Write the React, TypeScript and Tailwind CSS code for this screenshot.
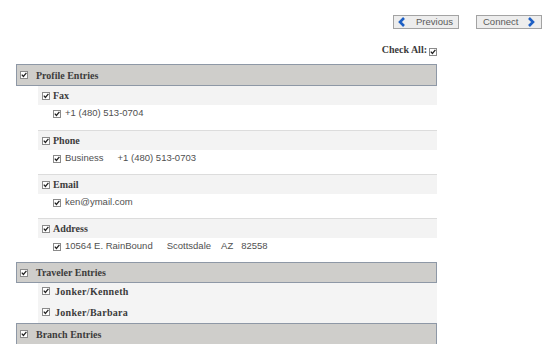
import React from 'react';

const serif = { fontFamily: '"Liberation Serif", "Times New Roman", serif' };
const sans = { fontFamily: '"Liberation Sans", Arial, sans-serif' };

function Box() {
  return (
    <span className="inline-flex h-[8px] w-[8px] shrink-0 items-center justify-center border border-[#8a8a8a] bg-white">
      <svg width="6" height="6" viewBox="0 0 6 6">
        <path d="M0.8 2.6 L2.4 4.4 L5.4 0.9" fill="none" stroke="#222" strokeWidth="1.3" />
      </svg>
    </span>
  );
}

function Chevron({ dir }: { dir: 'left' | 'right' }) {
  return (
    <svg width="8" height="10" viewBox="0 0 8 10">
      <path
        d={dir === 'left' ? 'M6 1 L2 5 L6 9' : 'M2 1 L6 5 L2 9'}
        fill="none"
        stroke="#1d5fc4"
        strokeWidth="2.6"
      />
    </svg>
  );
}

const groups = [
  { label: 'Fax', values: ['+1 (480) 513-0704'] },
  { label: 'Phone', values: ['Business', '+1 (480) 513-0703'] },
  { label: 'Email', values: ['ken@ymail.com'] },
  { label: 'Address', values: ['10564 E. RainBound', 'Scottsdale', 'AZ', '82558'] },
];

const gaps = ['', 'ml-[14px]', 'ml-[10px]', 'ml-[8px]'];

function SectionHeader({ title, h }: { title: string; h: string }) {
  return (
    <div className={`flex ${h} items-center border border-[#8e98a6] bg-[#cfcecb] pl-[3px]`}>
      <Box />
      <span className="ml-[8px] text-[10px] font-bold text-[#3c3c3c]" style={serif}>
        {title}
      </span>
    </div>
  );
}

export default function App() {
  return (
    <div className="relative h-[344px] w-[551px] overflow-hidden bg-white">
      <div className="flex justify-end gap-[17px] pr-[9px] pt-[15px]">
        <div className="flex h-[14px] w-[66px] items-center border border-[#a3a3a3] bg-[#ededed] pl-[4px]">
          <Chevron dir="left" />
          <span className="ml-[10px] text-[9.5px] text-[#5a5a5a]" style={sans}>Previous</span>
        </div>
        <div className="flex h-[14px] w-[66px] items-center justify-between border border-[#a3a3a3] bg-[#ededed] pl-[6px] pr-[6px]">
          <span className="text-[9.5px] text-[#5a5a5a]" style={sans}>Connect</span>
          <Chevron dir="right" />
        </div>
      </div>

      <div className="ml-[16px] w-[421px]">
        <div className="mt-[14px] flex h-[12px] items-center justify-end">
          <span className="text-[10px] font-bold text-[#3c3c3c]" style={serif}>Check All:</span>
          <span className="ml-[2px]"><Box /></span>
        </div>

        <div className="mt-[9px]">
          <SectionHeader title="Profile Entries" h="h-[22px]" />
          <div className="ml-[22px]">
            {groups.map((g, i) => (
              <div key={g.label} className={i > 0 ? 'border-t border-[#dcdcdc] pb-[7px]' : 'pb-[8px]'}>
                <div className="flex h-[19px] items-center bg-[#f3f3f3] pl-[4px]">
                  <Box />
                  <span className="ml-[3px] text-[10px] font-bold text-[#3c3c3c]" style={serif}>
                    {g.label}
                  </span>
                </div>
                <div className="flex h-[17px] items-center pl-[15px]">
                  <Box />
                  {g.values.map((v, j) => (
                    <span key={v} className={`${j === 0 ? 'ml-[4px]' : gaps[j]} text-[9.5px] text-[#505050]`} style={sans}>
                      {v}
                    </span>
                  ))}
                </div>
              </div>
            ))}
          </div>

          <SectionHeader title="Traveler Entries" h="h-[21px]" />
          <div className="ml-[22px] flex flex-col gap-[5px] bg-[#f4f4f4] pb-[3px]">
            {['Jonker/Kenneth', 'Jonker/Barbara'].map((n) => (
              <div key={n} className="flex h-[16px] items-center pl-[4px]">
                <Box />
                <span className="ml-[5px] text-[10px] font-bold tracking-[0.3px] text-[#3c3c3c]" style={serif}>
                  {n}
                </span>
              </div>
            ))}
          </div>

          <SectionHeader title="Branch Entries" h="h-[22px]" />
        </div>
      </div>
    </div>
  );
}
